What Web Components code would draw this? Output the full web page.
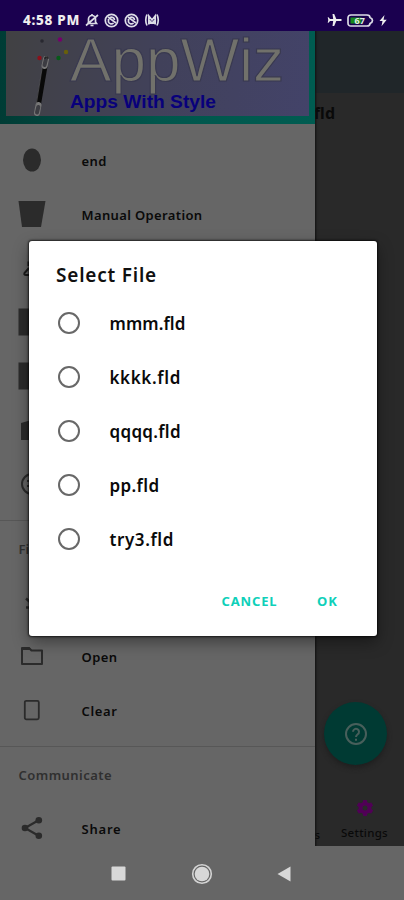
<!DOCTYPE html>
<html lang="en"><head><meta charset="utf-8"><title>AppWiz</title>
<style>html,body{margin:0;height:100%;overflow:hidden;background:#292929}body{font-family:"Noto Sans","Open Sans",sans-serif;color:#080808}</style></head>
<body><phone-screen></phone-screen>
<script>
function define(name, html, setup){
  customElements.define(name, class extends HTMLElement{
    connectedCallback(){
      if(this.shadowRoot) return;
      this.attachShadow({mode:'open'}).innerHTML = html;
      if(setup) setup.call(this, this.shadowRoot);
    }
  });
}

/* Single line of text tracked out to a given width. */
define('fit-text','<style>:host{display:inline-block;white-space:nowrap}</style><span><slot></slot></span>',function(root){
  const w = +this.getAttribute('w'), n = this.textContent.length, s = root.querySelector('span');
  const natural = s.getBoundingClientRect().width;
  this.style.letterSpacing = ((w - natural) / n) + 'px';
});

define('status-bar',`<style>
:host{display:flex;align-items:center;height:31px;box-sizing:border-box;padding:9px 17px 0 23px;background:#1a004f;color:#eee;font:800 13.500px/20px "Noto Sans",sans-serif}
svg{display:block;fill:none;stroke:#dcdce6;stroke-width:1.700}
.l{display:flex;gap:5px;align-items:center;flex:1}.r{display:flex;gap:5px;align-items:center}
</style>
<div class="l"><fit-text w="57">4:58 PM</fit-text>
<svg width="14" height="14" viewBox="0 0 14 14"><path d="M3 10.500h8.500l-1-1.500V6a3.500 3.500 0 0 0-7 0v3zM1 12.500 13 2M5.500 12.500h3M7 1v1.500"/></svg>
<svg width="15" height="15" viewBox="0 0 15 15"><circle cx="7.500" cy="7.500" r="6.200"/><path d="M4 4l8 6M4.500 6v3a3 3 0 0 0 5 1M6 4.500a3 3 0 0 1 4.500 2.500"/></svg>
<svg width="15" height="15" viewBox="0 0 15 15"><circle cx="7.500" cy="7.500" r="6.200"/><path d="M4 4l8 6M4.500 6v3a3 3 0 0 0 5 1M6 4.500a3 3 0 0 1 4.500 2.500"/></svg>
<svg width="16" height="14" viewBox="0 0 16 14"><path d="M3 1.500Q.500 7 3 12.500M13 1.500Q15.500 7 13 12.500M4.800 11.500V3L8 7l3.200-4v8.500M6.500 11V8.500L8 10l1.500-1.500V11"/></svg></div>
<div class="r"><svg width="15" height="14" viewBox="0 0 15 14"><path d="M14.500 8V6H9.300L7.200 1H5.500l.7 5H3L1.500 4.200H.7L1.300 7l-.6 2.800h.8L3 8h3.200l-.7 5h1.700L9.300 8z" fill="#eee" stroke="none"/></svg>
<svg width="27" height="13" viewBox="0 0 27 13"><path d="M4 1h16q3 0 3 2.500 2.500 1 2.500 3T23 9.500Q23 12 20 12H4q-3 0-3-3V4q0-3 3-3z"/><path d="M3.500 3.500h11v6h-11z" fill="#168a1c" stroke="none"/><text x="7.500" y="9.800" font-family="Noto Sans" font-size="9" font-weight="700" fill="#e4f0e2" stroke="none">67</text></svg>
<svg width="8" height="13" viewBox="0 0 8 13"><path d="M5.500 1 .500 7H3.500L2.500 12.300 7.700 5.700H4.500z" fill="#eee" stroke="none"/></svg></div>`);

define('app-banner',`<style>
:host{display:block;height:93px;box-sizing:border-box;padding:0 6px 8px;background:linear-gradient(90deg,#003c35,#00564c 50%,#005c51)}
.b{height:85px;background:linear-gradient(100deg,#414143,#41415a 50%,#434369);overflow:hidden}
svg{display:block}
text{font-family:"Liberation Sans",sans-serif}
</style><div class="b"><svg width="303" height="85" viewBox="6 31 303 85">
<path d="M45 66 38 107" stroke="#090909" stroke-width="5"/><path d="M46 59 44.500 66M38.500 105 37 113" stroke="#777" stroke-width="6" stroke-linecap="round"/><path d="M46 59 44.500 65M38.300 107 37 112.500" stroke="#3c3c42" stroke-width="4" stroke-linecap="round"/>
<path d="M42.500 66 36 106" stroke="#66666a" stroke-width=".6"/>
<circle cx="42" cy="41" r="1.800" fill="#282830"/><circle cx="60" cy="39.500" r="2.200" fill="#75006c"/><circle cx="66" cy="52" r="2.200" fill="#68600b"/><circle cx="39.500" cy="58" r="2.200" fill="#8b101a"/><circle cx="58.500" cy="58" r="2.200" fill="#075a19"/><path d="M45 59v-2h3v2" fill="none" stroke="#161616"/>
<text x="70" y="81" font-size="62" textLength="214" lengthAdjust="spacingAndGlyphs" fill="#71716b" stroke="#393950" stroke-width="1.200">AppWiz</text>
<text x="70" y="108" font-size="18" textLength="146" lengthAdjust="spacingAndGlyphs" font-weight="700" fill="#08007b">Apps With Style</text>
</svg></div>`);

const icons={
end:'<ellipse cx="14" cy="14" rx="9" ry="11.500" fill="#2b2b2b"/>',
manual:'<path d="M.500 1h27L23 27H4z" fill="#2b2b2b"/>',
input:'<path d="M10.500 12V8.500h5M11 14 6.500 19q-.8 2 1.500 2h14" fill="none" stroke="#1b1b1b" stroke-width="2"/>',
block:'<path d="M.500.500h27v27H.500z" fill="#2b2b2b"/>',
slant:'<path d="M3 7 10 5h15v19H3z" fill="#2b2b2b"/>',
round:'<circle cx="14" cy="14" r="10" fill="none" stroke="#2b2b2b" stroke-width="2"/><path d="M10 10v2M10 15v2" stroke="#2b2b2b" stroke-width="2"/>',
save:'<path d="M8 10.500 12 14M8 19.500h5" fill="none" stroke="#2b2b2b" stroke-width="2.500"/>',
open:'<path d="M4 6h7l2.500 2.500H24V22H4z" fill="none" stroke="#2b2b2b" stroke-width="2" stroke-linejoin="round"/><path d="M4 5h7l2.500 3H4z" fill="#2b2b2b"/>',
clear:'<rect x="6.800" y="4.800" width="14" height="18.500" rx="1.500" fill="none" stroke="#2b2b2b" stroke-width="1.800"/>',
share:'<path d="M21 6 7 14l14 8" fill="none" stroke="#2b2b2b" stroke-width="2.200"/><g fill="#2b2b2b"><circle cx="20.800" cy="6.200" r="3.300"/><circle cx="7" cy="14" r="3.300"/><circle cx="20.800" cy="21.800" r="3.300"/></g>'};

define('drawer-item',`<style>
:host{display:flex;align-items:center;height:54px;padding-left:18px;gap:35.500px;font-size:13px;font-weight:600;line-height:20px;color:#0a0a0a}
svg{display:block;flex:none}
::slotted(*){margin-top:1px}
</style><svg width="28" height="28" viewBox="0 0 28 28"></svg><slot></slot>`,function(r){r.querySelector('svg').innerHTML=icons[this.getAttribute('icon')];});

define('drawer-section',`<style>
:host{display:block;margin-top:9px;border-top:1px solid #575757}
h3{display:flex;align-items:center;margin:0;box-sizing:border-box;height:54px;padding:2px 0 0 18.500px;font-size:13px;font-weight:600;line-height:20px;color:#303030}
</style><h3><slot name="title"></slot></h3><slot></slot>`);

define('nav-drawer',`<style>
:host{display:block;background:#666;overflow:hidden}
.list{padding-top:9px}
</style><app-banner></app-banner><div class="list">
<drawer-item icon="end"><fit-text w="25.500">end</fit-text></drawer-item>
<drawer-item icon="manual"><fit-text w="121">Manual Operation</fit-text></drawer-item>
<drawer-item icon="input"></drawer-item><drawer-item icon="block"></drawer-item><drawer-item icon="block"></drawer-item><drawer-item icon="slant"></drawer-item><drawer-item icon="round"></drawer-item>
<drawer-section><span slot="title">File</span>
<drawer-item icon="save"></drawer-item>
<drawer-item icon="open"><fit-text w="36">Open</fit-text></drawer-item>
<drawer-item icon="clear"><fit-text w="36">Clear</fit-text></drawer-item></drawer-section>
<drawer-section><fit-text slot="title" w="93.500">Communicate</fit-text>
<drawer-item icon="share"><fit-text w="40">Share</fit-text></drawer-item></drawer-section></div>`);

define('main-view',`<style>
:host{display:flex;flex-direction:column;background:#292929}
.bar{height:62px;background:#202629}
.title{height:40px;display:flex;align-items:center;padding-right:69px;justify-content:flex-end;font-size:16px;font-weight:700;color:#090909}
.fill{flex:1}
nav{height:54px;display:flex;justify-content:flex-end;padding-right:16px;font-size:11.500px;font-weight:500;line-height:14px;color:#090909}
nav div{display:flex;flex-direction:column;align-items:center;padding-top:7px;gap:9px}
nav .prev{padding:36px 21px 0 0}
.fab{position:absolute;left:324px;top:702px;width:63px;height:63px;border-radius:50%;background:#003a33;display:grid;place-items:center;box-shadow:0 3px 5px #1f1f1f}
svg{display:block}
</style><div class="bar"></div><div class="title">file.fld</div><div class="fill"></div>
<nav><div class="prev">s</div><div><svg width="18" height="18" viewBox="0 0 20 20"><path d="M8 1h4l.500 2.500 2 1.100L17 3.800l2 3.400L17.100 9v2l1.900 1.800-2 3.400-2.500-.8-2 1.100L12 19H8l-.500-2.500-2-1.100-2.500.8-2-3.400L2.900 11V9L1 7.200l2-3.400 2.500.8 2-1.100zM10 7.200a2.800 2.800 0 1 0 0 5.600 2.800 2.800 0 0 0 0-5.600z" fill="#500056" fill-rule="evenodd"/></svg><fit-text w="47">Settings</fit-text></div></nav>
<div class="fab"><svg width="24" height="24" viewBox="0 0 24 24" fill="none" stroke="#485f5b" stroke-width="2"><circle cx="12" cy="12" r="10"/><path d="M9 9.800a3 3 0 1 1 4.700 2.500c-1.100.8-1.700 1.300-1.700 2.700M12 16.700v2"/></svg></div>`);

define('radio-row',`<style>
:host{display:flex;align-items:center;height:54px;gap:29.500px;font-size:17px;font-weight:600;line-height:24px;color:#0a0a0a}
i{box-sizing:border-box;width:22.500px;height:22.500px;border:2px solid #686868;border-radius:50%;flex:none}
::slotted(*){margin-top:1px}
</style><i></i><slot></slot>`);

define('file-dialog',`<style>
:host{display:flex;flex-direction:column;box-sizing:border-box;background:#fff;border-radius:3px;box-shadow:0 0 2px 1px #000a,0 6px 16px #0006}
h2{box-sizing:border-box;margin:0;padding:22px 0 0 27px;height:55px;font-size:19px;line-height:24px;font-weight:600;color:#101010}
.rows{padding-left:28.500px}
.act{display:flex;justify-content:flex-end;gap:39.500px;padding:25px 39px 0 0;font-size:13px;line-height:20px;font-weight:700;color:#0ed0b9}
</style><h2><fit-text w="101">Select File</fit-text></h2><div class="rows">
<radio-row><fit-text w="76">mmm.fld</fit-text></radio-row>
<radio-row><fit-text w="71.500">kkkk.fld</fit-text></radio-row>
<radio-row><fit-text w="71.500">qqqq.fld</fit-text></radio-row>
<radio-row><fit-text w="50">pp.fld</fit-text></radio-row>
<radio-row><fit-text w="64.500">try3.fld</fit-text></radio-row></div>
<div class="act"><fit-text w="56">CANCEL</fit-text><fit-text w="21">OK</fit-text></div>`);

define('system-nav',`<style>
:host{display:flex;align-items:center;height:54px;background:#666;box-sizing:border-box;padding:1px 0 0 111px}
svg{display:block}svg:nth-of-type(2){margin-left:64px}svg:nth-of-type(3){margin-left:64px}
</style><svg width="16" height="16"><rect x=".500" y=".500" width="14" height="14" rx="1" fill="#d8d8d8"/></svg>
<svg width="22" height="22" viewBox="0 0 22 22"><circle cx="11" cy="11" r="9.300" fill="none" stroke="#d4d4d4" stroke-width="1.600"/><circle cx="11" cy="11" r="7.300" fill="#d8d8d8"/></svg>
<svg width="14" height="16" viewBox="0 0 14 16"><path d="M13.500.500v15L.500 8z" fill="#d8d8d8"/></svg>`);

define('phone-screen',`<style>
:host{position:relative;display:flex;flex-direction:column;width:404px;height:900px;overflow:hidden}
main-view{flex:1}
nav-drawer{position:absolute;left:0;top:31px;width:315px;height:815px;box-shadow:0 0 2px 1px #111}
system-nav,status-bar{position:relative;z-index:1}
file-dialog{position:absolute;z-index:2;left:29px;top:241px;width:348px;height:395px}
</style><status-bar></status-bar><main-view></main-view><nav-drawer></nav-drawer><system-nav></system-nav><file-dialog></file-dialog>`);
</script></body></html>
